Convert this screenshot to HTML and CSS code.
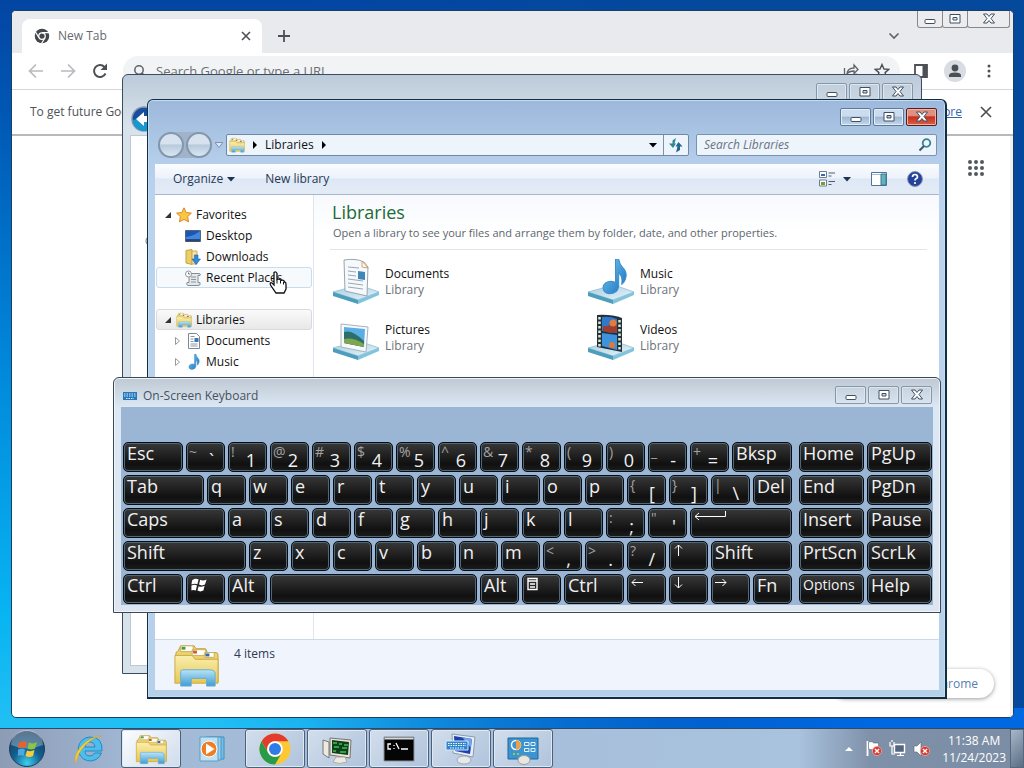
FILE: index.html
```
<!DOCTYPE html>
<html lang="en">
<head>
<meta charset="utf-8">
<title>Desktop</title>
<link rel="stylesheet" href="styles.css">
</head>
<body>
<svg class="defs" aria-hidden="true">
  <defs>
    <linearGradient id="gFolder" x1="0" y1="0" x2="0" y2="1"><stop offset="0" stop-color="#fbeeb0"/><stop offset="1" stop-color="#e6c850"/></linearGradient>
    <linearGradient id="gBlue" x1="0" y1="0" x2="0" y2="1"><stop offset="0" stop-color="#b9e4f6"/><stop offset="1" stop-color="#3f9bd3"/></linearGradient>
    <linearGradient id="gTray" x1="0" y1="0" x2="1" y2="1"><stop offset="0" stop-color="#a9cfe0"/><stop offset="1" stop-color="#e4f2fa"/></linearGradient>
    <linearGradient id="gNote" x1="0" y1="0" x2="1" y2="1"><stop offset="0" stop-color="#7cc8f2"/><stop offset="1" stop-color="#1670bd"/></linearGradient>
    <radialGradient id="gOrb" cx=".5" cy=".9" r=".9"><stop offset="0" stop-color="#3cd0f0"/><stop offset=".45" stop-color="#14608f"/><stop offset="1" stop-color="#123a60"/></radialGradient>
    <symbol id="i-min" viewBox="0 0 14 14"><rect x="2" y="7.500" width="10" height="4" rx="1"/></symbol>
    <symbol id="i-max" viewBox="0 0 14 14"><path fill-rule="evenodd" d="M2 2.500h10v8.500H2zM5 5.500v2.500h4V5.500z"/></symbol>
    <symbol id="i-close" viewBox="0 0 14 14"><path d="M1.500 2h3.500l2 2.500L9 2h3.500L9 6.500l3.500 4.500H9L7 8.500 5 11H1.500L5 6.500z"/></symbol>
    <symbol id="i-lib" viewBox="0 0 48 48">
      <path d="M3 12q0-2 2-2l3-6h14l2 3h10l2 4h9q2 0 2 3v28H3z" fill="#ecd36c" stroke="#c39f35"/>
      <path d="M8 4h13v6H8zM20 8h14v6H20zM33 11h10v5H33z" fill="#fff" stroke="#cbb05a"/>
      <path d="M9 5h4v3H9z" fill="#4c9a3c"/><path d="M21 9h4v3h-4z" fill="#d25a2a"/><path d="M34 12h4v3h-4z" fill="#3268bc"/>
      <path d="M2 14h18l3 4h24v25H2z" fill="url(#gFolder)" stroke="#c9aa45"/>
      <path d="M8 31q0-2 2-2h28q6 0 6 4v13h-9v-8H19v8H8z" fill="url(#gBlue)" stroke="#69aed6"/>
    </symbol>
    <symbol id="i-tray" viewBox="0 0 50 20"><path d="M2 7 28 0 48 7 27 15z" fill="url(#gTray)" stroke="#a0c6da"/><path d="M2 7v4l25 8V15z" fill="#4d9dbd"/><path d="M27 15v4l21-9V7z" fill="#80c5dc"/></symbol>
    <symbol id="i-note" viewBox="0 0 24 34"><path d="M13 0h3q1 5 4 8 4 4 3 9-1 5-4 7 1-8-3-11v13q-1 7-9 7-6-1-6-6 1-6 8-6l4 1z" fill="url(#gNote)" stroke="#3c8fcb"/></symbol>
    <symbol id="i-doc" viewBox="0 0 16 16"><path d="M2.500.5h8l3 3v12h-11z" fill="#fff" stroke="#7c8896"/><path d="M4.500 3.500h4M4.500 6h3M4.500 8.500h3M4.500 11h7M4.500 13h7" stroke="#8a98a6"/><path d="M8.500 5h4v4h-4z" fill="#3c76b0"/></symbol>
    <symbol id="i-chrome" viewBox="0 0 32 32"><circle cx="16" cy="16" r="15.500" fill="#fcc934"/><path d="M2.600 8.200A15.500 15.500 0 0 1 29.400 8.200H16A7.800 7.800 0 0 0 9.200 19.900z" fill="#e33b2e"/><path d="M2.600 8.200 9.200 19.900A7.800 7.800 0 0 0 22.800 19.900L16 31.500A15.500 15.500 0 0 1 2.600 8.200z" fill="#269b4b"/><circle cx="16" cy="16" r="7.800" fill="#fff"/><circle cx="16" cy="16" r="6" fill="#2f7be8"/></symbol>
    <symbol id="i-flag" viewBox="0 0 20 20"><path d="M1 4q4-3 8-1L7.500 9q-3-1.500-8 .5z" class="fr"/><path d="M11 3.500q4 2 8-.5l-2 6.500q-4 2-7.500 0z" class="fg"/><path d="M-.5 11q4-2.500 7.500-.500L5.500 17q-3.500-1.500-7 .5z" class="fb"/><path d="M9 11.500q3.500 1.500 7.500-.500L15 17q-4 2-7.500 0z" class="fy"/></symbol>
    <symbol id="i-bad" viewBox="0 0 12 12"><circle cx="6" cy="6" r="5.500" fill="#d53a33" stroke="#f0a49c"/><path d="M3.500 3.500l5 5m0-5l-5 5" stroke="#fff" stroke-width="1.600"/></symbol>
  </defs>
</svg>

<main class="desktop">

  <section class="win chrome" aria-label="New Tab">
    <div class="caps caps-chrome">
      <button aria-label="Minimize"><svg><use href="#i-min"/></svg></button>
      <button aria-label="Maximize"><svg><use href="#i-max"/></svg></button>
      <button aria-label="Close"><svg><use href="#i-close"/></svg></button>
    </div>
    <header class="tabs">
      <div class="tab">
        <svg class="s16" viewBox="0 0 32 32"><circle cx="16" cy="16" r="14.500" fill="#43474b"/><circle cx="16" cy="16" r="6.500" fill="#43474b" stroke="#fff" stroke-width="2.500"/><path d="M16 9h14M10 19.500 3 8M22 19.500 15 31" stroke="#fff" stroke-width="2.500"/></svg>
        <span>New Tab</span>
        <button class="plain" aria-label="Close tab"><svg class="s12" viewBox="0 0 12 12"><path d="M2 2l8 8m0-8l-8 8" stroke="#4d5156" stroke-width="1.600"/></svg></button>
      </div>
      <button class="plain" aria-label="New tab button"><svg class="s12" viewBox="0 0 12 12"><path d="M6 0v12M0 6h12" stroke="#4d5156" stroke-width="1.800"/></svg></button>
      <button class="plain chev" aria-label="Search tabs"><svg class="s12" viewBox="0 0 12 12"><path d="M1.500 3.500 6 8l4.500-4.500" fill="none" stroke="#5f6368" stroke-width="1.700"/></svg></button>
    </header>
    <div class="bar">
      <button class="plain" aria-label="Back"><svg class="s16" viewBox="0 0 16 16"><path d="M15 8H2M8 1.500 1.500 8 8 14.500" fill="none" stroke="#b9bbbe" stroke-width="1.700"/></svg></button>
      <button class="plain" aria-label="Forward"><svg class="s16" viewBox="0 0 16 16"><path d="M1 8h13M8 1.500 14.500 8 8 14.500" fill="none" stroke="#b9bbbe" stroke-width="1.700"/></svg></button>
      <button class="plain" aria-label="Reload"><svg class="s16" viewBox="0 0 16 16"><path d="M13.500 10.500A6 6 0 1 1 12.500 4" fill="none" stroke="#4d5156" stroke-width="2"/><path d="M15 .5v6.500H8.500z" fill="#4d5156"/></svg></button>
      <label class="omni">
        <svg class="s14" viewBox="0 0 14 14"><circle cx="6" cy="6" r="4.200" fill="none" stroke="#5f6368" stroke-width="1.500"/><path d="M9 9l4 4" stroke="#5f6368" stroke-width="1.500"/></svg>
        <input type="text" placeholder="Search Google or type a URL" aria-label="Address">
        <svg class="s16" viewBox="0 0 16 16"><path d="M1.500 5v9.500H13v-4M4 11q.5-6 7-6V2l4 4.500-4 4V8Q6 8 4 11z" fill="none" stroke="#5f6368" stroke-width="1.300"/></svg>
        <svg class="s16" viewBox="0 0 16 16"><path d="M8 1.500l2 4.500 4.800.4-3.700 3.200 1.200 4.900L8 12l-4.300 2.500 1.200-4.900L1.200 6.400 6 6z" fill="none" stroke="#4d5156" stroke-width="1.400"/></svg>
      </label>
      <button class="plain" aria-label="Side panel"><svg class="s14" viewBox="0 0 14 14"><path d="M1 1h12v12H1z" fill="none" stroke="#4d5156" stroke-width="1.800"/><path d="M8.500 1H13v12H8.500z" fill="#4d5156"/></svg></button>
      <button class="plain avatar" aria-label="Profile"><svg class="s16" viewBox="0 0 16 16"><circle cx="8" cy="5" r="3.400" fill="#4a4f56"/><path d="M2 14v-1.500Q2 9.500 8 9.500t6 3V14z" fill="#4a4f56"/></svg></button>
      <button class="plain" aria-label="Menu"><svg class="s14" viewBox="0 0 14 14"><g fill="#4d5156"><circle cx="7" cy="2" r="1.500"/><circle cx="7" cy="7" r="1.500"/><circle cx="7" cy="12" r="1.500"/></g></svg></button>
    </div>
    <div class="info">
      <p>To get future Google Chrome updates, you'll need Windows 10 or later.</p>
      <a href="#">Learn more</a>
      <button class="plain" aria-label="Dismiss"><svg class="s12" viewBox="0 0 12 12"><path d="M1 1l10 10m0-10L1 11" stroke="#4d5156" stroke-width="1.700"/></svg></button>
    </div>
    <div class="ntp">
      <button class="plain apps" aria-label="Google apps"><svg class="s16" viewBox="0 0 16 16"><g fill="#55595e"><circle cx="2" cy="2" r="2"/><circle cx="8" cy="2" r="2"/><circle cx="14" cy="2" r="2"/><circle cx="2" cy="8" r="2"/><circle cx="8" cy="8" r="2"/><circle cx="14" cy="8" r="2"/><circle cx="2" cy="14" r="2"/><circle cx="8" cy="14" r="2"/><circle cx="14" cy="14" r="2"/></g></svg></button>
      <button class="customize">Customize Chrome</button>
    </div>
  </section>

  <section class="win glass back" aria-label="Control Panel">
    <div class="caps dim">
      <button aria-label="Minimize"><svg><use href="#i-min"/></svg></button>
      <button aria-label="Maximize"><svg><use href="#i-max"/></svg></button>
      <button aria-label="Close"><svg><use href="#i-close"/></svg></button>
    </div>
    <div class="backnav"><svg class="s26" viewBox="0 0 26 26"><circle cx="13" cy="13" r="12" fill="#174f9e" stroke="#8298b5" stroke-width="1.500"/><path d="M2 14a11 11 0 0 0 22 0q-10-4-22 0z" fill="#1798d0"/><path d="M5 13l8-7v4h8v6h-8v4z" fill="#fff"/></svg></div>
    <div class="backbody"><svg class="s12" viewBox="0 0 12 12"><circle cx="6" cy="6" r="5" fill="none" stroke="#777"/></svg></div>
  </section>

  <section class="win glass explorer" aria-label="Libraries">
    <div class="caps">
      <button aria-label="Minimize"><svg><use href="#i-min"/></svg></button>
      <button aria-label="Maximize"><svg><use href="#i-max"/></svg></button>
      <button class="red" aria-label="Close"><svg><use href="#i-close"/></svg></button>
    </div>
    <div class="address">
      <div class="orbs"><button aria-label="Back"></button><button aria-label="Forward"></button></div>
      <svg class="s8" viewBox="0 0 8 8"><path d="M0 1.500h8L4 6.500z" fill="#d9e7f6" stroke="#7f93ab"/></svg>
      <div class="path">
        <svg class="s16"><use href="#i-lib"/></svg>
        <svg class="s8" viewBox="0 0 8 8"><path d="M2 0v8l4-4z"/></svg>
        <span>Libraries</span>
        <svg class="s8" viewBox="0 0 8 8"><path d="M2 0v8l4-4z"/></svg>
        <button class="plain drop" aria-label="Previous locations"><svg class="s8" viewBox="0 0 8 8"><path d="M0 2h8L4 6.500z"/></svg></button>
        <button class="plain refresh" aria-label="Refresh"><svg class="s16" viewBox="0 0 16 16"><path d="M8 1 4.500 3.500v3H1L5 11l3-4.500H6.500z" fill="#2d8793"/><path d="M10.500 5 14.500 9.500H12V13l-4 2.500L9.500 9.500H7.500z" fill="#25648f"/></svg></button>
      </div>
      <label class="search"><input type="text" placeholder="Search Libraries" aria-label="Search Libraries"><svg class="s14" viewBox="0 0 14 14"><circle cx="8.500" cy="5" r="3.800" fill="#e9f7fa" stroke="#3b8292" stroke-width="1.800"/><path d="M6 8 1.500 12.500" stroke="#38566f" stroke-width="2"/></svg></label>
    </div>
    <div class="client">
      <div class="tools">
        <button class="plain">Organize <svg class="s8" viewBox="0 0 8 8"><path d="M0 2h8L4 6.500z" fill="#1e3350"/></svg></button>
        <button class="plain">New library</button>
        <button class="plain view" aria-label="Change your view"><svg class="s16" viewBox="0 0 16 16"><path d="M.5.5h7v6h-7zM.5 9h7v6h-7z" fill="#fff" stroke="#6d7f92"/><path d="M2 3h4v2H2z" fill="#3269a8"/><path d="M2 11h4v3H2z" fill="#7c9c37"/><path d="M9.500 2H16M9.500 5h3M9.500 10.500H16M9.500 13.500h3" stroke="#4b5d70"/></svg><svg class="s8" viewBox="0 0 8 8"><path d="M0 2h8L4 6.500z" fill="#1e3350"/></svg></button>
        <button class="plain" aria-label="Preview pane"><svg class="s16" viewBox="0 0 16 16"><path d="M.5 1.500h15v13H.5z" fill="#fff" stroke="#4f7498"/><path d="M1 3.500h14" stroke="#a7bed4"/><path d="M10 3h5v11h-5z" fill="#64b3bc" stroke="#3d7892"/></svg></button>
        <button class="plain" aria-label="Help"><svg class="s16" viewBox="0 0 16 16"><circle cx="8" cy="8" r="7.400" fill="#24429b" stroke="#7e8ca8"/><path d="M5.500 6q0-2.500 2.500-2.500T10.500 6q0 1-1.500 1.800-1 .6-1 1.700" fill="none" stroke="#fff" stroke-width="1.700"/><circle cx="8" cy="12" r="1.100" fill="#fff"/></svg></button>
      </div>
      <div class="panes">
        <nav class="tree">
          <a href="#" class="top"><svg class="s8" viewBox="0 0 8 8"><path d="M7 1v6H1z" fill="#333"/></svg><svg class="s16" viewBox="0 0 16 16"><path d="M8 .8l2.200 4.700 5.200.6-3.800 3.600 1 5.200L8 12.400l-4.600 2.500 1-5.200L.6 6.100l5.200-.6z" fill="#fbc545" stroke="#d98b28"/></svg>Favorites</a>
          <a href="#"><svg class="s16" viewBox="0 0 16 16"><path d="M.5 2.500h15v11H.5z" fill="#1d55b4" stroke="#566779"/><path d="M1 9q8-1 14-6v8H1z" fill="#4287d9"/><path d="M1 11.500h14v2H1z" fill="#294568"/></svg>Desktop</a>
          <a href="#"><svg class="s16" viewBox="0 0 16 16"><path d="M1 1.500l6-1v15l-6-1.500z" fill="#edcd68" stroke="#c7a13a"/><path d="M7 2h5v13H7z" fill="#f6e2a0" stroke="#cfae52"/><path d="M9.500 6h3.500v4h2.500L11 15.500 7 10h2.500z" fill="#2b8ddb" stroke="#1d62a8" stroke-width=".6"/></svg>Downloads</a>
          <a href="#" class="hover"><svg class="s16" viewBox="0 0 16 16"><path d="M4 3.500h10q2 0 1 2h-2v7h2q1 3-2 3H3q-2-.5-1-3h2z" fill="#e4e7e9" stroke="#868e95"/><path d="M6 7h5M6 9.500h5M6 12h5" stroke="#8d969d"/><circle cx="3.500" cy="4" r="3" fill="#fff" stroke="#8d969d"/><path d="M3.500 2.500V4H5" fill="none" stroke="#777"/></svg>Recent Places</a>
          <a href="#" class="top sel"><svg class="s8" viewBox="0 0 8 8"><path d="M7 1v6H1z" fill="#333"/></svg><svg class="s16"><use href="#i-lib"/></svg>Libraries</a>
          <a href="#" class="sub"><svg class="s8" viewBox="0 0 8 8"><path d="M1.500.5v7L5.500 4z" fill="#fff" stroke="#999"/></svg><svg class="s16"><use href="#i-doc"/></svg>Documents</a>
          <a href="#" class="sub"><svg class="s8" viewBox="0 0 8 8"><path d="M1.500.5v7L5.500 4z" fill="#fff" stroke="#999"/></svg><svg class="s16"><use href="#i-note"/></svg>Music</a>
        </nav>
        <div class="content">
          <h1>Libraries</h1>
          <p>Open a library to see your files and arrange them by folder, date, and other properties.</p>
          <ul class="libs">
            <li><svg viewBox="0 0 50 48"><use href="#i-tray" y="27" width="50" height="20"/><path d="M13 2q12-2 20 2l4 5-1 29-22-5z" fill="#f5f9fc" stroke="#98a5b0"/><path d="M31 3v6l6 1z" fill="#fff" stroke="#d3a26c"/><path d="M17 9l11 1M17 13l8 1M17 17l8 1M17 21l15 2M17 25l15 2M17 29l15 2" stroke="#9aa8b4"/><path d="M27 13l7 1v8l-7-1z" fill="#3f87b9"/></svg><div>Documents<small>Library</small></div></li>
            <li><svg viewBox="0 0 50 48"><use href="#i-tray" y="27" width="50" height="20"/><use href="#i-note" x="16" y="1" width="25" height="36"/></svg><div>Music<small>Library</small></div></li>
            <li><svg viewBox="0 0 50 48"><use href="#i-tray" y="27" width="50" height="20"/><path d="M10 10l27 3-2 25-25-5z" fill="#f7fafc" stroke="#a4b3bf"/><path d="M13 13l21 2-1 18-20-4z" fill="#5aaee6"/><path d="M13 18q8-3 20 9v6l-20-4z" fill="#2c6f6a"/><path d="M13 25q9-2 20 5v3l-20-4z" fill="#7fa64c"/></svg><div>Pictures<small>Library</small></div></li>
            <li><svg viewBox="0 0 50 48"><use href="#i-tray" y="27" width="50" height="20"/><path d="M11 1q14-1 25 3v34L11 33z" fill="#25303a"/><path d="M16 3q9-1 15 2v14l-15-2z" fill="#2f78cc"/><path d="M16 19l15 2v15l-15-4z" fill="#3d93dd"/><path d="M17 12h5l5-4 4 3v7l-7 1-7-2z" fill="#9d3f2e"/><circle cx="27" cy="9" r="3.500" fill="#e37b3c"/><circle cx="26" cy="31" r="3" fill="#df7a35"/><path d="M13.500 3v30M33.500 6v30" stroke="#d7ecd4" stroke-width="2.500" stroke-dasharray="2.500 2"/></svg><div>Videos<small>Library</small></div></li>
          </ul>
        </div>
      </div>
      <footer class="status"><svg><use href="#i-lib"/></svg><span>4 items</span></footer>
    </div>
  </section>

  <section class="win osk" aria-label="On-Screen Keyboard">
    <div class="caps dim">
      <button aria-label="Minimize"><svg><use href="#i-min"/></svg></button>
      <button aria-label="Maximize"><svg><use href="#i-max"/></svg></button>
      <button aria-label="Close"><svg><use href="#i-close"/></svg></button>
    </div>
    <h2><svg class="s16" viewBox="0 0 16 16"><path d="M1 4h14v8H1z" fill="#2677bc"/><path d="M2 6h12M2 8h12M4 10.500h8" stroke="#d9edf9" stroke-width="1.200" stroke-dasharray="1.500 1"/></svg>On-Screen Keyboard</h2>
    <div class="keys">
      <div class="main">
        <button class="w3">Esc</button><button class="two"><i>~</i><b>`</b></button><button class="two"><i>!</i><b>1</b></button><button class="two"><i>@</i><b>2</b></button><button class="two"><i>#</i><b>3</b></button><button class="two"><i>$</i><b>4</b></button><button class="two"><i>%</i><b>5</b></button><button class="two"><i>^</i><b>6</b></button><button class="two"><i>&amp;</i><b>7</b></button><button class="two"><i>*</i><b>8</b></button><button class="two"><i>(</i><b>9</b></button><button class="two"><i>)</i><b>0</b></button><button class="two"><i>_</i><b>-</b></button><button class="two"><i>+</i><b>=</b></button><button class="w3">Bksp</button>
        <button class="w4">Tab</button><button>q</button><button>w</button><button>e</button><button>r</button><button>t</button><button>y</button><button>u</button><button>i</button><button>o</button><button>p</button><button class="two"><i>{</i><b>[</b></button><button class="two"><i>}</i><b>]</b></button><button class="two"><i>|</i><b>\</b></button><button>Del</button>
        <button class="w5">Caps</button><button>a</button><button>s</button><button>d</button><button>f</button><button>g</button><button>h</button><button>j</button><button>k</button><button>l</button><button class="two"><i>:</i><b>;</b></button><button class="two"><i>"</i><b>'</b></button><button class="w5" aria-label="Enter"><svg width="32" height="14" viewBox="0 0 32 14"><path d="M31.500 0v5.500H1M5 2 1 5.500 5 9" fill="none" stroke="#fff"/></svg></button>
        <button class="w6">Shift</button><button>z</button><button>x</button><button>c</button><button>v</button><button>b</button><button>n</button><button>m</button><button class="two"><i>&lt;</i><b>,</b></button><button class="two"><i>&gt;</i><b>.</b></button><button class="two"><i>?</i><b>/</b></button><button aria-label="Up"><svg class="s12" viewBox="0 0 12 12"><path d="M5.500 12V1M2 4.500l3.500-3.500L9 4.500" fill="none" stroke="#fff"/></svg></button><button class="w4">Shift</button>
        <button class="w3">Ctrl</button><button aria-label="Windows"><svg class="winkey" viewBox="-1 0 21 20"><use href="#i-flag" width="20" height="20"/></svg></button><button>Alt</button><button class="w10" aria-label="Space"></button><button>Alt</button><button aria-label="Menu"><svg class="s14" viewBox="0 0 14 14"><path d="M2 1.500h9v11H2zM2 4h9M4 7h5M4 10h5" fill="none" stroke="#fff" stroke-width="1.400"/></svg></button><button class="w3">Ctrl</button><button aria-label="Left"><svg class="s12" viewBox="0 0 12 12"><path d="M12 5.500H1M4.500 2 1 5.500 4.500 9" fill="none" stroke="#fff"/></svg></button><button aria-label="Down"><svg class="s12" viewBox="0 0 12 12"><path d="M5.500 0v11M2 7.500 5.500 11 9 7.500" fill="none" stroke="#fff"/></svg></button><button aria-label="Right"><svg class="s12" viewBox="0 0 12 12"><path d="M0 5.500h11M7.500 2 11 5.500 7.500 9" fill="none" stroke="#fff"/></svg></button><button>Fn</button>
      </div>
      <div class="side">
        <button>Home</button><button>PgUp</button><button>End</button><button>PgDn</button><button>Insert</button><button>Pause</button><button>PrtScn</button><button>ScrLk</button><button class="small">Options</button><button>Help</button>
      </div>
    </div>
  </section>

  <svg class="cursor" viewBox="0 0 18 24"><path d="M5 1.500q2-1.500 3 1v6q3-1 4 1 3-1 3.500 1.500 1.500 0 1.500 2v5L15 22H7L1.500 14q-1-3 1.500-2l2 2z" fill="#fff" stroke="#111" stroke-width="1.300"/><path d="M8 8.500v4M11.500 9.500v3M14.500 11v2.500" stroke="#111"/></svg>

  <footer class="taskbar">
    <button class="start" aria-label="Start"><svg viewBox="0 0 38 38"><circle cx="19" cy="19" r="17.500" fill="url(#gOrb)" stroke="#1f3d5c"/><path d="M3 15a16 15 0 0 1 32 0q-16 7-32 0z" fill="#fff" opacity=".3"/><svg x="8" y="8" width="22" height="22" viewBox="-2 0 22 20" class="colour"><use href="#i-flag" width="20" height="20"/></svg></svg></button>
    <button class="quick" aria-label="Internet Explorer"><svg viewBox="0 0 32 32"><path fill-rule="evenodd" d="M17 4a12 12 0 1 0 11.500 16h-7q-1.500 3-4.500 3-5 0-5-5h17Q30 4 17 4zm-5 10q1-5 5-5t5 5z" fill="#4dbdeb" stroke="#2389c5"/><path d="M3 30C-2 22 14 2 29 3q-4-.5-9 3C10 12 4 22 3 30z" fill="#f7cf38" stroke="#d8a922" stroke-width=".6"/></svg></button>
    <button class="task active" aria-label="Windows Explorer"><svg viewBox="0 0 48 48"><use href="#i-lib"/></svg></button>
    <button class="quick" aria-label="Media Player"><svg viewBox="0 0 32 32"><path d="M12 4h15v22H12z" fill="#76bde6" stroke="#438fbe"/><path d="M9 4h15v23H9z" fill="#95d0f0" stroke="#4c97c5"/><path d="M3 4h18v24H3z" fill="#bfe1f4" stroke="#5a9fc9"/><circle cx="12" cy="16" r="8" fill="#ee7e25" stroke="#fff"/><path d="M9 10.500v11l8.500-5.500z" fill="#fff"/></svg></button>
    <button class="task" aria-label="Google Chrome"><svg><use href="#i-chrome"/></svg></button>
    <button class="task" aria-label="System Monitor"><svg viewBox="0 0 32 32"><path d="M2 7l6 2v16l-6-4z" fill="#ece9df" stroke="#777"/><path d="M9 5l21 2-1 18-20-3z" fill="#e9e5da" stroke="#77756c"/><path d="M11 7l17 2-1 13-16-2z" fill="#10401e"/><path d="M12 10h4m2 1h3m2 1h4M13 14h5m3 1h5M12 18h3m4 1h6" stroke="#3bc453" stroke-width="1.500"/><path d="M15 24h9l2 5q-8 3-14 0z" fill="#eeeae0" stroke="#aaa"/></svg></button>
    <button class="task" aria-label="Command Prompt"><svg viewBox="0 0 32 32"><path d="M1 4h30v24H1z" fill="#050505" stroke="#8a8f94"/><path d="M1.500 4.500h29v2h-29z" fill="#d7dbdf"/><path d="M8 11H5v5h3M11 12v1m0 2v1M13 10l3 6m2 0h7" fill="none" stroke="#fff" stroke-width="1.300"/></svg></button>
    <button class="task" aria-label="On-Screen Keyboard task"><svg viewBox="0 0 32 32"><path d="M7 1l23 3-2 20-20-4z" fill="#e6edf3" stroke="#8a9caf"/><path d="M9 3l18 3-2 15-15-3z" fill="#1e3fae"/><path d="M17 4l10 2-1 9z" fill="#6fa3ee"/><path d="M1 8h22v9H1z" fill="#2d86ce" stroke="#dcebf6"/><path d="M3 10.500h18M3 12.500h18M5 15h14" stroke="#fff" stroke-dasharray="1.500 1"/><ellipse cx="19" cy="27" rx="7" ry="4" fill="#e6e8ea" stroke="#9eabb7"/></svg></button>
    <button class="task" aria-label="Control Panel task"><svg viewBox="0 0 32 32"><path d="M1 5h30v21H1z" fill="#3d93cf" stroke="#1d689e"/><circle cx="9" cy="12" r="4.500" fill="none" stroke="#fff" stroke-width="1.500"/><path d="M9 12V7a5 5 0 0 1 0 10z" fill="#e9a14c"/><path d="M17.500 9.500h4.500v3h-4.500zM24 9.500h4v3h-4zM17.500 15.500h4.500v3h-4.500zM24 15.500h4v3h-4z" fill="none" stroke="#e2f2fb"/><path d="M6 21h2m2 0h2" stroke="#8bd24c" stroke-width="2"/><ellipse cx="17" cy="27" rx="6" ry="4.500" fill="#e8e6df" stroke="#a09e98"/></svg></button>
    <div class="systray">
      <button class="plain" aria-label="Show hidden icons"><svg class="s8" viewBox="0 0 8 8"><path d="M0 6h8L4 2z" fill="#fff"/></svg></button>
      <svg class="s18" viewBox="0 0 18 18"><path d="M2.500 1v15" stroke="#fff" stroke-width="1.800"/><path d="M3.500 2q5-1 5 1h5v7h-6l-4-1z" fill="#fff" stroke="#59677a" stroke-width=".6"/><use href="#i-bad" x="7" y="6" width="10" height="10"/></svg>
      <svg class="s18" viewBox="0 0 18 18"><path d="M5.500 4.500h10v8h-10z" fill="#52677e" stroke="#fff" stroke-width="1.400"/><path d="M8 15.500h7M11.500 13v2M1 2v4h4V2M3 0v2M3 6v8h3" fill="none" stroke="#fff" stroke-width="1.200"/></svg>
      <svg class="s18" viewBox="0 0 18 18"><path d="M1 6h3l4-4v14l-4-4H1z" fill="#fff" stroke="#59677a" stroke-width=".6"/><use href="#i-bad" x="7" y="6" width="10" height="10"/></svg>
      <time>11:38 AM<br>11/24/2023</time>
      <button class="peek" aria-label="Show desktop"></button>
    </div>
  </footer>
</main>
</body>
</html>
```
FILE: styles.css
```
* { box-sizing: border-box; }
body { margin: 0; font: 12px/16px "Open Sans", "Noto Sans", sans-serif; color: #111; }
button { font: inherit; color: inherit; padding: 0; margin: 0; }
input { font: inherit; min-width: 0; }
svg { flex: none; display: block; }
h1, h2, p, ul { margin: 0; padding: 0; font-weight: normal; }
.defs { position: absolute; width: 0; height: 0; }
.s8 { width: 8px; height: 8px; }
.s12 { width: 12px; height: 12px; }
.s14 { width: 14px; height: 14px; }
.s16 { width: 16px; height: 16px; }
.s18 { width: 18px; height: 18px; }
.s26 { width: 26px; height: 26px; }
.plain { border: 0; background: none; display: flex; align-items: center; gap: 4px; }

.desktop {
  position: relative; height: 100vh; overflow: hidden;
  background:
    linear-gradient(90deg, transparent 20%, #0068e0 85%) bottom / 100% 60px no-repeat,
    linear-gradient(90deg, transparent 30%, #04499c 70%),
    linear-gradient(#0345a3, #0058b4 15%, #0084d8 45%, #08b4f2 80%, #2ac4f4);
}
.win { position: absolute; display: flex; flex-direction: column; }

/* caption buttons */
.caps { display: flex; gap: 2px; position: absolute; top: 8px; right: 8px; }
.caps button {
  width: 31px; height: 18px; display: grid; place-items: center;
  border: 1px solid #5f7895; border-radius: 2px;
  background: linear-gradient(#cbdcef 45%, #9fb6d0 50%, #c3d8ee);
  box-shadow: inset 0 0 0 1px #e3edf8;
}
.caps svg { width: 14px; height: 14px; fill: #fff; stroke: #3f4f63; stroke-width: 1; }
.caps .red { background: linear-gradient(#e09080 40%, #c5301c 50%, #d8604a); border-color: #5a1c1c; box-shadow: inset 0 0 0 1px #eab4a4; }
.dim button { background: none; border-color: #8796a8; box-shadow: inset 0 0 0 1px #dbe6f0; }
.caps-chrome { top: 0; right: 3px; gap: 0; }
.caps-chrome button { width: 26px; height: 17px; margin-left: -1px; background: #ececef; border-color: #85888d; border-top: 0; border-radius: 0 0 3px 3px; box-shadow: none; }
.caps-chrome button:last-child { width: 43px; }

/* browser */
.chrome { inset: 10px 10px 50px 11px; background: #fff; border: 1px solid #1c3e62; border-radius: 5px; font-size: 13px; overflow: hidden; }
.tabs { height: 42px; flex: none; background: #e9eaee; display: flex; align-items: flex-end; gap: 16px; padding-left: 10px; }
.tab { width: 240px; height: 34px; border-radius: 8px 8px 0 0; background: #fff; display: flex; align-items: center; gap: 8px; padding: 0 10px 0 12px; color: #666a6e; font-size: 12px; }
.tab button { margin-left: auto; }
.tabs > button { height: 34px; }
.tabs .chev { margin: 0 113px 0 auto; }
.bar { height: 37px; flex: none; display: flex; align-items: center; gap: 16px; padding: 0 17px 0 16px; background: #fff; border-bottom: 1px solid #d4d6da; }
.omni { flex: 1; display: flex; align-items: center; gap: 9px; height: 30px; margin: 0 -2px 0 -1px; border-radius: 15px; background: #f1f3f4; padding: 0 10px; }
.omni .s16 { margin-left: 6px; }
.omni input { flex: 1; border: 0; padding: 0; background: none; font-size: 13px; }
.omni input::placeholder { color: #6c7075; opacity: 1; }
.avatar { width: 22px; height: 22px; border-radius: 50%; background: #d9dce3; justify-content: center; }
.info { height: 46px; flex: none; display: flex; align-items: center; gap: 24px; padding: 0 21px 0 18px; font-size: 12px; color: #4e5257; border-bottom: 2px solid #b9b9bb; }
.info p { white-space: nowrap; }
.info a { margin-left: auto; margin-right: -6px; color: #3566ad; white-space: nowrap; }
.ntp { flex: 1; display: flex; flex-direction: column; justify-content: space-between; align-items: flex-end; padding: 24px 16px 19px 0; border-right: 3px solid #f0f1f2; }
.apps { margin-right: 10px; }
.customize { height: 29px; border: 0; border-radius: 15px; background: #fff; color: #5580ae; padding: 0 16px 0 40px; font-size: 12px; box-shadow: 0 1px 4px #999; }

/* translucent frames */
.glass { border: 1px solid #182c40; border-radius: 6px 6px 0 0; }
.back { inset: 74px 102px 94px 122px; background: linear-gradient(#bccbda, #d8e2ea 50px); padding: 0 7px 7px; border-color: #3a4d60; }
.backnav { padding: 31px 0 3px 1px; }
.backbody { flex: 1; background: #fff; border: 1px solid #bcc9d5; padding: 99px 14px; }
.explorer { inset: 99px 77px 69px 147px; background: linear-gradient(#9db8db, #b4cdea 60px, #bcd3ee 100px, #b7d0ea); padding: 33px 6px 7px 7px; box-shadow: inset 0 0 0 1px #b9e0f4; border-width: 1px 2px 2px 1px; }
.address { height: 24px; flex: none; display: flex; align-items: center; gap: 3px; margin-left: 3px; }
.orbs { display: flex; gap: 2px; border-radius: 13px; background: #a1b3c9; }
.orbs button { width: 26px; height: 26px; border-radius: 50%; border: 2px solid #8396ab; background: linear-gradient(#d6e3ef 45%, #b8c9dc 50%, #d9e7f2); }
.path { flex: 1; height: 22px; display: flex; align-items: center; gap: 6px; background: #edf4fc; border: 1px solid #6f88a5; border-radius: 2px; padding-left: 2px; }
.path .drop { margin-left: auto; }
.refresh { align-self: stretch; width: 25px; border-left: 1px solid #7d91a8; justify-content: center; }
.search { width: 241px; height: 22px; margin: 0 2px 0 4px; display: flex; align-items: center; background: #edf4fc; border: 1px solid #7b93ae; border-radius: 2px; padding: 0 4px 0 7px; }
.search input { flex: 1; border: 0; padding: 0; background: none; font-style: italic; }
.search input::placeholder { color: #69737f; opacity: 1; }
.client { flex: 1; min-height: 0; margin-top: 7px; display: flex; flex-direction: column; background: #fff; }
.tools { height: 31px; flex: none; display: flex; align-items: center; gap: 30px; padding: 0 16px 0 18px; background: linear-gradient(#fafcff, #edf3fb 45%, #dee8f5 50%, #e3ebf6); border-bottom: 1px solid #a7b8cc; color: #253855; }
.tools .view { margin-left: auto; gap: 8px; }
.tools button:nth-last-child(-n+2) { margin-left: -10px; }
.panes { flex: 1; min-height: 0; display: flex; overflow: hidden; }
.tree { width: 159px; flex: none; padding: 9px 1px; border-right: 1px solid #dfe6f0; }
.tree a { height: 21px; display: flex; align-items: center; gap: 5px; padding-left: 28px; border: 1px solid transparent; border-radius: 3px; color: #111; text-decoration: none; }
.tree .top { padding-left: 7px; gap: 4px; }
.tree .sub { padding-left: 17px; gap: 4px; }
.tree .hover { border-color: #c9dcec; background: #f7fafd; }
.tree .sel { margin-top: 21px; border-color: #dadada; background: linear-gradient(#fafafa, #e8e8e8); }
.content { flex: 1; padding: 5px 12px 0 16px; background: linear-gradient(#f7f9fe, #fff 40px); }
.content h1 { font-size: 18px; line-height: 24px; color: #1c6b32; padding-left: 2px; }
.content p { font-size: 11px; color: #5c6670; line-height: 17px; padding: 0 0 8px 3px; border-bottom: 1px solid #e2e5ea; }
.libs { list-style: none; display: grid; grid-template-columns: 255px 255px; row-gap: 8px; margin-top: 8px; padding-left: 1px; }
.libs li { display: flex; align-items: center; gap: 4px; height: 48px; }
.libs svg { width: 50px; height: 48px; }
.libs small { display: block; font-size: 12px; color: #6d7278; }
.status { height: 51px; flex: none; display: flex; gap: 14px; padding: 2px 17px; border-top: 1px solid #ccd9ea; background: #f0f4fd; color: #2e3a56; }
.status svg { width: 48px; height: 46px; }
.status span { padding-top: 4px; }

/* on-screen keyboard */
.osk { inset: 377px 83px 155px 113px; background: linear-gradient(#bec9d3, #dce8f4 30px, #dde6f0); border: 1px solid #3b4856; border-radius: 6px 6px 0 0; padding: 0 7px 7px; box-shadow: inset 0 0 0 1px #edf4fa; }
.osk h2 { height: 29px; flex: none; display: flex; align-items: center; gap: 5px; padding: 7px 2px 0 1px; font-size: 12px; color: #475260; }
.keys { flex: 1; min-height: 0; display: flex; gap: 7px; padding: 35px 1px 1px 2px; background: #9bb5d5; color: #f1f1f1; }
.main { flex: 669; display: grid; grid-template-columns: repeat(32, minmax(0, 1fr)); grid-template-rows: repeat(5, minmax(0, 1fr)); gap: 3px; }
.side { flex: 133; display: grid; grid-template-columns: repeat(2, minmax(0, 1fr)); grid-template-rows: repeat(5, minmax(0, 1fr)); gap: 3px; }
.keys button { grid-column: span 2; display: flex; align-items: flex-start; overflow: hidden; border: 1px solid #080c10; border-radius: 5px; background: linear-gradient(#383838, #202020 45%, #101010 75%, #1c1c1c); box-shadow: inset 0 0 0 1px #50687a; padding: 0 3px; font-size: 18px; line-height: 21px; text-align: left; }
.side button { grid-column: auto; }
.keys .w3 { grid-column: span 3; }
.keys .w4 { grid-column: span 4; }
.keys .w5 { grid-column: span 5; }
.keys .w6 { grid-column: span 6; }
.keys .w10 { grid-column: span 10; }
.keys .two { justify-content: space-between; padding: 0 10px 0 2px; }
.two i { font-style: normal; font-size: 14px; line-height: 18px; color: #a2a2a2; }
.two b { font-weight: normal; line-height: 34px; }
.keys .small { font-size: 14px; line-height: 20px; }
.keys svg { margin-top: 2px; }
.winkey { width: 18px; height: 16px; fill: #fff; }

.cursor { position: absolute; left: 269px; top: 271px; width: 18px; height: 24px; }

/* taskbar */
.taskbar { position: absolute; inset: auto 0 0 0; height: 40px; display: flex; gap: 2px; background: linear-gradient(90deg, #8d9cb5, #a3bad7 14%, #a9c2dd 78%, #7f91a9 85%, #7b8da4); border-top: 1px solid #2e4a6b; color: #fff; }
.taskbar button { border: 0; background: none; display: grid; place-items: center; }
.start { width: 54px; }
.start svg { width: 38px; height: 38px; }
.start svg svg { width: 22px; height: 22px; }
.colour { --r: #e8632c; --g: #8cc63e; --b: #4ba8e0; --y: #f9cc38; }
.fr { fill: var(--r, #fff); }
.fg { fill: var(--g, #fff); }
.fb { fill: var(--b, #fff); }
.fy { fill: var(--y, #fff); }
.quick, .task { width: 60px; }
.taskbar .task { border: 1px solid #4d6079; border-radius: 3px; background: linear-gradient(135deg, #d2deec, #afc3dc); box-shadow: inset 0 0 0 1px #dfe9f4; }
.taskbar .active { background: linear-gradient(135deg, #fbfdff, #cfdcec); }
.quick svg, .task svg { width: 32px; height: 32px; }
.start + .quick { margin-left: 3px; }
.systray { margin-left: auto; display: flex; align-items: center; gap: 6px; }
.systray .plain { margin-right: 6px; }
.systray time { margin-left: 5px; margin-right: -2px; text-align: center; line-height: 17px; }
.taskbar .peek { width: 14px; align-self: stretch; border: 1px solid #56677e; background: linear-gradient(135deg, #a9b8c9, #596d84); }
```
